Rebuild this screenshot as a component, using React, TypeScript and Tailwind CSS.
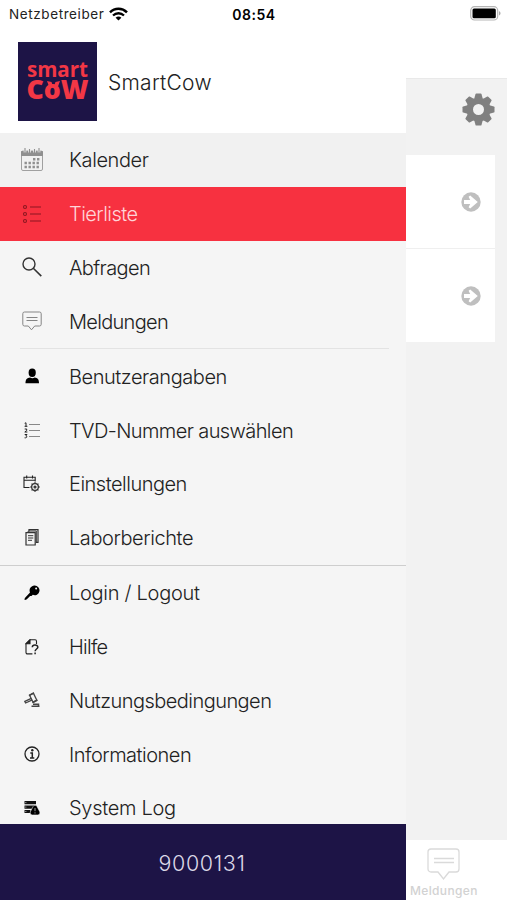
import React from "react";

type MenuItem = {
  label: string;
  icon: React.ReactNode;
  tracking: string;
  active?: boolean;
  muted?: boolean;
};

const Logo = () => (
  <svg
    className="font-['Open_Sans',sans-serif] font-extrabold"
    width="79"
    height="79"
    viewBox="0 0 79 79"
    fill="#f23745"
  >
    <rect width="79" height="79" fill="#1d1446" />
    <text x="9" y="34.500" fontSize="21" fontWeight="700" textLength="61" lengthAdjust="spacingAndGlyphs">
      smart
    </text>
    <text x="8.500" y="57" fontSize="26" textLength="62" lengthAdjust="spacingAndGlyphs">
      CoW
    </text>
    <path d="M29 39l4.500 1 1.500 4-4 .5zM42 39l-4.500 1-1.500 4 4 .5z" />
  </svg>
);

const WifiIcon = () => (
  <svg width="19" height="14" viewBox="0 0 19 14" fill="none" stroke="#000">
    <path d="M1 5.300c4.800-4.700 12.200-4.700 17 0" strokeWidth="2.500" />
    <path d="M4 8.500c3.200-3 7.800-3 11 0" strokeWidth="2.300" />
    <path d="M6.600 10.700c1.700-1.500 4.100-1.500 5.800 0l-2.900 2.900z" fill="#000" stroke="none" />
  </svg>
);

const GearIcon = () => (
  <svg width="33" height="33" viewBox="-16.500 -16.500 33 33" fill="#808080">
    <circle r="8.800" fill="none" stroke="#808080" strokeWidth="6.600" />
    {[0, 45, 90, 135, 180, 225, 270, 315].map((angle) => (
      <path key={angle} d="M-4.200-11l1.200-4.400q.2-.6.800-.6h4.400q.6 0 .8.600L4.200-11z" transform={`rotate(${angle})`} />
    ))}
  </svg>
);

const CalendarIcon = () => (
  <svg width="24" height="24" viewBox="0 0 24 24" fill="none" stroke="#8f8f8f">
    <rect x="1.500" y="3" width="21" height="19.500" rx="1.500" stroke="#a0a0a0" />
    <path d="M1.500 3.500h21v4h-21z" fill="#8f8f8f" />
    <path d="M5 .5v4M9.500 .5v4M14.500 .5v4M19 .5v4" stroke="#f1f1f1" strokeWidth="2.600" />
    <path d="M5 0v5M9.500 1v4M14.500 1v4M19 0v5" strokeWidth="1.100" />
    <path d="M13 11.300h7M4.500 15h15.500M4.500 19h15.500" strokeWidth="2.400" strokeDasharray="2.400 1.600" />
  </svg>
);

const ListIcon = () => (
  <svg width="20" height="20" viewBox="0 0 20 20" fill="none" stroke="#8c1720" strokeWidth="1.100">
    <circle cx="3" cy="3" r="1.500" />
    <circle cx="3" cy="10" r="1.500" />
    <circle cx="3" cy="17" r="1.500" />
    <path d="M8 3h11M8 10h11M8 17h11" />
  </svg>
);

const SearchIcon = () => (
  <svg width="20" height="20" viewBox="0 0 20 20" fill="none" stroke="#333" strokeWidth="1.400">
    <circle cx="7" cy="7" r="6" />
    <path d="M11.300 11.300l8 7.800" strokeWidth="1.600" />
  </svg>
);

const MessageIcon = () => (
  <svg width="20" height="20" viewBox="0 0 20 20" fill="none" stroke="#858585">
    <path d="M2.500 1h15a1.700 1.700 0 0 1 1.700 1.700v10.600a1.700 1.700 0 0 1-1.700 1.700h-4.800l-3.200 3.800L6.300 15H2.500a1.700 1.700 0 0 1-1.700-1.700V2.700A1.700 1.700 0 0 1 2.500 1z" />
    <path d="M4.500 6.500h11M4.500 9.500h11" />
  </svg>
);

const UserIcon = () => (
  <svg width="16" height="16" viewBox="0 0 16 16" fill="#000">
    <ellipse cx="8.200" cy="4.800" rx="3.600" ry="4.200" />
    <path d="M1.500 15.200c0-3.800 1.500-5.400 4.600-5.700 1.400 1.100 3.200 1.100 4.600 0 3 .3 4.300 1.900 4.300 5.700z" />
  </svg>
);

const NumberedIcon = () => (
  <svg width="16" height="17" viewBox="0 0 16 17" fill="none" stroke="#222" strokeWidth="1">
    <path d="M.7 1.300L2 .8v3.500M.6 4.300h2.800" />
    <path d="M.7 7h2v1.500L.8 10h2.600" />
    <path d="M.7 12.500h2.300L1.800 14c1.900.2 1.200 2.200-1.200 1.800" />
    <path d="M5 2.500h11M5 8.500h11M5 14.500h11" stroke="#888" />
  </svg>
);

const CalendarGearIcon = () => (
  <svg width="17" height="17" viewBox="0 0 17 17" fill="none" stroke="#222" strokeWidth="1.100">
    <path d="M6.500 12.500H1V2.200h11.200v4.300M1 5.200h11.200M3.700.4v3M9.500.4v3" />
    <circle cx="12" cy="12" r="3.400" stroke="#444" strokeWidth="1.500" />
    <circle cx="12" cy="12" r="1" />
    <path d="M12 7.200v1.400M12 15.400v1.400M7.200 12h1.400M15.400 12h1.400M8.600 8.600l1 1M14.400 14.400l1 1M15.400 8.600l-1 1M9.600 14.400l-1 1" />
  </svg>
);

const ReportIcon = () => (
  <svg width="14" height="17" viewBox="0 0 14 17" fill="none" stroke="#333">
    <path d="M4 2.500V.7h9v12.600h-2" strokeWidth="1.200" />
    <path d="M2.500 3.500l1-1.500h7.800v12" />
    <path d="M1 3.700h9.200V16H1z" strokeWidth="1.200" />
    <path d="M3 6.700h5.300M3 9h5.300M3 11.300h4" />
  </svg>
);

const KeyIcon = () => (
  <svg width="16" height="16" viewBox="0 0 16 16">
    <path
      fill="#000"
      fillRule="evenodd"
      d="M10.500.6a4.800 4.800 0 1 1-1.700 9.200L7.500 11l-1.400.1-1.700 1.600-1.900 1.700-1.500.7-.6-.6.5-1.500L6 7.400A4.800 4.800 0 0 1 10.500.6zm1.600 1.900a1 1 0 1 0 .1 2 1 1 0 0 0-.1-2z"
    />
  </svg>
);

const HelpIcon = () => (
  <svg width="14" height="16" viewBox="0 0 14 16" fill="none" stroke="#222" strokeWidth="1.100">
    <path d="M11.500 5V2.200A1.400 1.400 0 0 0 10.100.8H5L1 4.800v8.700a1.400 1.400 0 0 0 1.400 1.400h5" />
    <path d="M5 .8v4H1z" fill="#222" />
    <path d="M7.300 8.200c.2-3 5.700-2.700 5.500.1-.2 1.700-2.700 1.800-2.700 4" strokeWidth="1.500" />
    <path d="M10.100 13.600v1.700" strokeWidth="1.500" />
  </svg>
);

const GavelIcon = () => (
  <svg width="16" height="16" viewBox="0 0 16 16" fill="none" stroke="#444" strokeWidth="1.300">
    <path d="M5.600 3.200l3.800-2 3.400 7-3.800 2z" />
    <path d="M5 3.600l4.900-2.700M8.500 10.700l4.900-2.600" strokeWidth="1.600" />
    <path d="M7.300 6.300L.8 9.300l.8 1.700 6.700-3.200" />
    <path d="M7.500 14.300h8M9 12.300h5.500v2" strokeWidth="1.500" />
  </svg>
);

const InfoIcon = () => (
  <svg width="16" height="16" viewBox="0 0 16 16" fill="none" stroke="#222">
    <circle cx="8" cy="8" r="7" strokeWidth="1.300" />
    <circle cx="8.300" cy="4.300" r="1.200" fill="#222" stroke="none" />
    <path d="M6.300 7h2v4.700M6 12h4.300" strokeWidth="1.500" />
  </svg>
);

const LogIcon = () => (
  <svg width="16" height="16" viewBox="0 0 16 16">
    <path d="M.5 1h11.500v3.300H.5zM.5 5.500h9.500v3.300H.5zM.5 10h6v3h-6z" fill="#111" />
    <path d="M1 2.600h1.500M1 7.100h1.500M1 11.500h1.500" stroke="#f5f5f5" strokeWidth=".5" />
    <path
      d="M11 5.200c1 0 1.500.5 2 1.300l2.600 5c.7 1.700-.1 3.300-1.700 3.400H8.200c-1.700-.1-2.400-1.700-1.700-3.400l2.600-5c.4-.8 1-1.300 1.900-1.300z"
      fill="#000"
      stroke="#f5f5f5"
      strokeWidth=".5"
    />
    <path d="M11 8v3.200M11 12.300v1.200" stroke="#999" />
  </svg>
);

const ArrowIcon = () => (
  <svg width="20" height="20" viewBox="0 0 20 20">
    <circle cx="10" cy="10" r="9.700" fill="#bfbfbf" />
    <path d="M3 8h6.200L7.600 4.800 9.200 3.600l7.600 6.400-7.600 6.400-1.600-1.200L9.200 12H3z" fill="#fff" />
  </svg>
);

const mainItems: MenuItem[] = [
  { label: "Kalender", icon: <CalendarIcon />, tracking: "tracking-[-0.4px]", muted: true },
  { label: "Tierliste", icon: <ListIcon />, tracking: "tracking-[-0.55px]", active: true },
  { label: "Abfragen", icon: <SearchIcon />, tracking: "tracking-[-0.6px]" },
  { label: "Meldungen", icon: <MessageIcon />, tracking: "tracking-[-0.7px]" },
];

const userItems: MenuItem[] = [
  { label: "Benutzerangaben", icon: <UserIcon />, tracking: "tracking-[-0.45px]" },
  { label: "TVD-Nummer auswählen", icon: <NumberedIcon />, tracking: "tracking-[-0.6px]" },
  { label: "Einstellungen", icon: <CalendarGearIcon />, tracking: "tracking-[-0.5px]" },
  { label: "Laborberichte", icon: <ReportIcon />, tracking: "tracking-[-0.42px]" },
];

const systemItems: MenuItem[] = [
  { label: "Login / Logout", icon: <KeyIcon />, tracking: "tracking-[-0.28px]" },
  { label: "Hilfe", icon: <HelpIcon />, tracking: "tracking-[-0.75px]" },
  { label: "Nutzungsbedingungen", icon: <GavelIcon />, tracking: "tracking-[-0.55px]" },
  { label: "Informationen", icon: <InfoIcon />, tracking: "tracking-[-0.5px]" },
  { label: "System Log", icon: <LogIcon />, tracking: "tracking-[-0.3px]" },
];

function MenuRow({ label, icon, tracking, active, muted }: MenuItem) {
  const color = active ? "bg-[#f73140] text-[#ffd5d8]" : muted ? "bg-[#f1f1f1] text-[#222]" : "text-[#222]";
  return (
    <li className={`flex h-[53.75px] shrink-0 items-center ${color}`}>
      <span className="flex w-[63px] shrink-0 justify-center">{icon}</span>
      <span className={`pt-px pl-[6px] text-[20px] leading-6 font-light whitespace-nowrap ${tracking}`}>{label}</span>
    </li>
  );
}

function StatusBar() {
  return (
    <div className="grid h-7 shrink-0 grid-cols-3 items-center pr-[6px] pl-[9px] text-[#222]">
      <div className="flex items-center gap-[5px]">
        <span className="text-[13.5px] tracking-[0.6px]">Netzbetreiber</span>
        <WifiIcon />
      </div>
      <span className="pr-[2px] text-center text-[14px] font-semibold tracking-[0.5px] text-black">08:54</span>
      <svg className="mb-[2px] justify-self-end" width="31" height="15" viewBox="0 0 31 15">
        <rect x=".7" y=".7" width="27" height="13.300" rx="3.800" fill="#fff" stroke="#b5b5b5" strokeWidth="1.200" />
        <rect x="2.500" y="2.500" width="23.300" height="9.700" rx="1.500" fill="#000" />
        <path d="M29 5.300c2 .6 2 3.500 0 4.200z" fill="#aaa" />
      </svg>
    </div>
  );
}

function Drawer() {
  return (
    <aside className="flex w-[406px] shrink-0 flex-col bg-[#f5f5f5]">
      <header className="flex h-[105px] shrink-0 items-start bg-white pt-[14px] pl-[18px]">
        <Logo />
        <h1 className="pt-[29px] pl-[11px] text-[21px] leading-6 font-light tracking-[0.25px] text-[#222]">SmartCow</h1>
      </header>
      <nav className="min-h-0 flex-1 overflow-hidden">
        <ul>
          {mainItems.map((item) => (
            <MenuRow key={item.label} {...item} />
          ))}
        </ul>
        <hr className="mr-[17px] mb-[0.5px] ml-5 border-[#e3e3e3]" />
        <ul>
          {userItems.map((item) => (
            <MenuRow key={item.label} {...item} />
          ))}
        </ul>
        <hr className="mb-[0.5px] border-[#cecece]" />
        <ul>
          {systemItems.map((item) => (
            <MenuRow key={item.label} {...item} />
          ))}
        </ul>
      </nav>
      <footer className="flex h-[76px] shrink-0 items-center justify-center bg-[#1d1446] pt-[3px] pr-[2px] text-[21.5px] font-light tracking-[0.6px] text-[#dcd9e8]">
        9000131
      </footer>
    </aside>
  );
}

function Page() {
  return (
    <main className="flex min-w-0 flex-1 flex-col bg-[#f2f2f2]">
      <div className="h-[50px] shrink-0 bg-white" />
      <div className="flex h-[77px] shrink-0 justify-end border-t border-[#e9e9e9] pt-[14px] pr-[12px]">
        <GearIcon />
      </div>
      <div className="mr-[12px] divide-y divide-[#efefef] bg-white">
        <div className="flex h-[94px] items-center justify-end pr-[14px]">
          <ArrowIcon />
        </div>
        <div className="flex h-[93px] items-center justify-end pr-[14px]">
          <ArrowIcon />
        </div>
      </div>
      <div className="mt-auto flex h-[60px] flex-col items-start bg-white pt-[8px] text-[#d2d2d2]">
        <svg className="ml-[21px]" width="34" height="33" viewBox="0 0 34 33" fill="none" stroke="#dadada" strokeWidth="1.300">
          <path d="M4 1h25a3 3 0 0 1 3 3v17a3 3 0 0 1-3 3h-7l-5.500 7-5.500-7H4a3 3 0 0 1-3-3V4a3 3 0 0 1 3-3z" />
          <path d="M7 10.500h20M7 14.500h20" />
        </svg>
        <span className="pt-[2px] pl-[4px] text-[12px] leading-4 font-medium tracking-[0.35px]">Meldungen</span>
      </div>
    </main>
  );
}

export default function App() {
  return (
    <div className="flex h-[900px] w-[507px] flex-col overflow-hidden bg-white font-[Inter,sans-serif]">
      <StatusBar />
      <div className="flex min-h-0 flex-1">
        <Drawer />
        <Page />
      </div>
    </div>
  );
}
